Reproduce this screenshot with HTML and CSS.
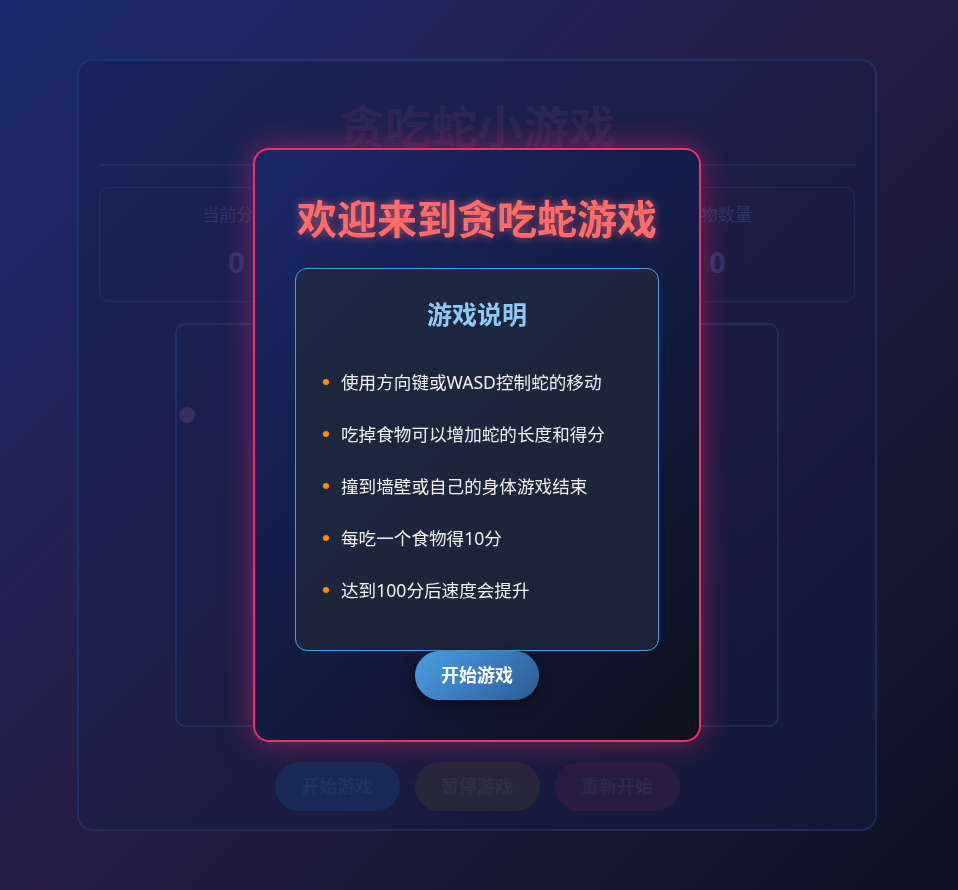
FILE: index.html
```html
<!DOCTYPE html>
<html lang="zh-CN">
<head>
<meta charset="utf-8">
<title>贪吃蛇小游戏</title>
<link rel="stylesheet" href="styles.css">
</head>
<body>
<div class="page">
  <div class="container">
    <h1 class="title">贪吃蛇小游戏</h1>
    <div class="stats">
      <div class="stat"><div class="label">当前分数</div><div class="value">0</div></div>
      <div class="stat"><div class="label">最高分数</div><div class="value">0</div></div>
      <div class="stat"><div class="label">食物数量</div><div class="value">0</div></div>
    </div>
    <div class="board">
      <svg class="board-svg" width="600" height="400" viewBox="0 0 600 400">
        <circle cx="10" cy="90" r="8" fill="#3a2e5c"/>
      </svg>
    </div>
    <div class="controls">
      <button class="ctrl ctrl-start">开始游戏</button>
      <button class="ctrl ctrl-pause">暂停游戏</button>
      <button class="ctrl ctrl-restart">重新开始</button>
    </div>
  </div>
</div>
<div class="overlay">
  <div class="modal">
    <h2 class="modal-title">欢迎来到贪吃蛇游戏</h2>
    <div class="rules">
      <h3 class="rules-title">游戏说明</h3>
      <ul class="rules-list">
        <li>使用方向键或WASD控制蛇的移动</li>
        <li>吃掉食物可以增加蛇的长度和得分</li>
        <li>撞到墙壁或自己的身体游戏结束</li>
        <li>每吃一个食物得10分</li>
        <li>达到100分后速度会提升</li>
      </ul>
    </div>
    <button class="start-btn">开始游戏</button>
  </div>
</div>
</body>
</html>
```

FILE: styles.css
```css
* { box-sizing: border-box; }

html, body {
  margin: 0;
  padding: 0;
  height: 890px;
  overflow: hidden;
}

body {
  font-family: "Noto Sans", "Noto Sans CJK SC", sans-serif;
  background: linear-gradient(135deg, #1b2b6e 0%, #251d44 50%, #0c1220 100%);
  color: #e8e8e8;
}

.page {
  width: 954px;
  display: flex;
  justify-content: center;
  padding-top: 59px;
}

.container {
  width: 800px;
  border: 2px solid rgba(45, 90, 165, 0.3);
  border-radius: 16px;
  background: rgba(20, 30, 75, 0.42);
  padding: 32px 20px 18px;
  display: flex;
  flex-direction: column;
  align-items: center;
}

.title {
  margin: 0;
  width: 100%;
  text-align: center;
  font-size: 46px;
  line-height: 66px;
  font-weight: 700;
  color: #2b2654;
  padding-bottom: 5px;
  border-bottom: 2px solid rgba(50, 95, 170, 0.2);
}

.stats {
  margin-top: 21px;
  width: 100%;
  display: grid;
  grid-template-columns: repeat(3, 1fr);
  padding: 15px 16px 19px;
  border: 1px solid rgba(50, 95, 170, 0.22);
  border-radius: 10px;
}

.stat {
  display: flex;
  flex-direction: column;
  align-items: center;
  gap: 15px;
}

.label {
  font-size: 17px;
  line-height: 24px;
  color: #2b3567;
}

.value {
  font-size: 29px;
  line-height: 40px;
  font-weight: 700;
  color: #2d3466;
}

.board {
  margin-top: 21px;
  border: 2px solid rgba(50, 95, 170, 0.28);
  border-radius: 10px;
  width: 604px;
  height: 404px;
}

.board-svg { display: block; }

.controls {
  margin-top: 35px;
  display: flex;
  gap: 15px;
}

.ctrl {
  font-family: inherit;
  border: none;
  border-radius: 25px;
  padding: 12px 26px;
  width: 125px;
  font-size: 18px;
  line-height: 25px;
  font-weight: 700;
}

.ctrl-start { background: #172a58; color: #25325b; }
.ctrl-pause { background: #28273a; color: #2e3047; }
.ctrl-restart { background: #2a1b40; color: #2c2947; }

.overlay {
  position: fixed;
  top: 0;
  left: 0;
  width: 954px;
  height: 890px;
  display: flex;
  align-items: center;
  justify-content: center;
}

.modal {
  width: 448px;
  border: 2px solid #ec2f6d;
  border-radius: 16px;
  background: linear-gradient(135deg, #1a2868 0%, #141d48 45%, #0e111b 100%);
  box-shadow: 0 0 30px rgba(236, 40, 105, 0.5);
  padding: 40px;
  display: flex;
  flex-direction: column;
  align-items: center;
}

.modal-title {
  margin: 0 0 20px;
  font-size: 40px;
  line-height: 58px;
  font-weight: 700;
  color: #ff6b6b;
  text-shadow: 0 0 10px rgba(255, 107, 107, 0.65);
  white-space: nowrap;
}

.rules {
  width: 100%;
  border: 1px solid #4a9ee6;
  border-radius: 12px;
  background: linear-gradient(135deg, #1e2843, #1b2336);
  padding: 28px 25px 21px;
}

.rules-title {
  margin: 0 0 37px;
  text-align: center;
  font-size: 25px;
  line-height: 35px;
  font-weight: 700;
  color: #8ec9f5;
}

.rules-list {
  list-style: none;
  margin: 0;
  padding: 0;
}

.rules-list li {
  display: flex;
  align-items: center;
  gap: 12px;
  font-size: 17.6px;
  line-height: 26px;
  margin-bottom: 26px;
  color: #f0f0f0;
}

.rules-list li::before {
  content: "";
  flex: none;
  width: 6px;
  height: 6px;
  margin-left: 2px;
  border-radius: 50%;
  background: #ff8c00;
}

.start-btn {
  font-family: inherit;
  border: none;
  border-radius: 25px;
  padding: 12px 26px;
  width: 124px;
  font-size: 18px;
  line-height: 25px;
  font-weight: 700;
  color: #ffffff;
  background: linear-gradient(135deg, #4aa0e2 0%, #3a7cc0 50%, #2d5a8e 100%);
  box-shadow: 0 5px 15px rgba(0, 0, 0, 0.45);
}
```
